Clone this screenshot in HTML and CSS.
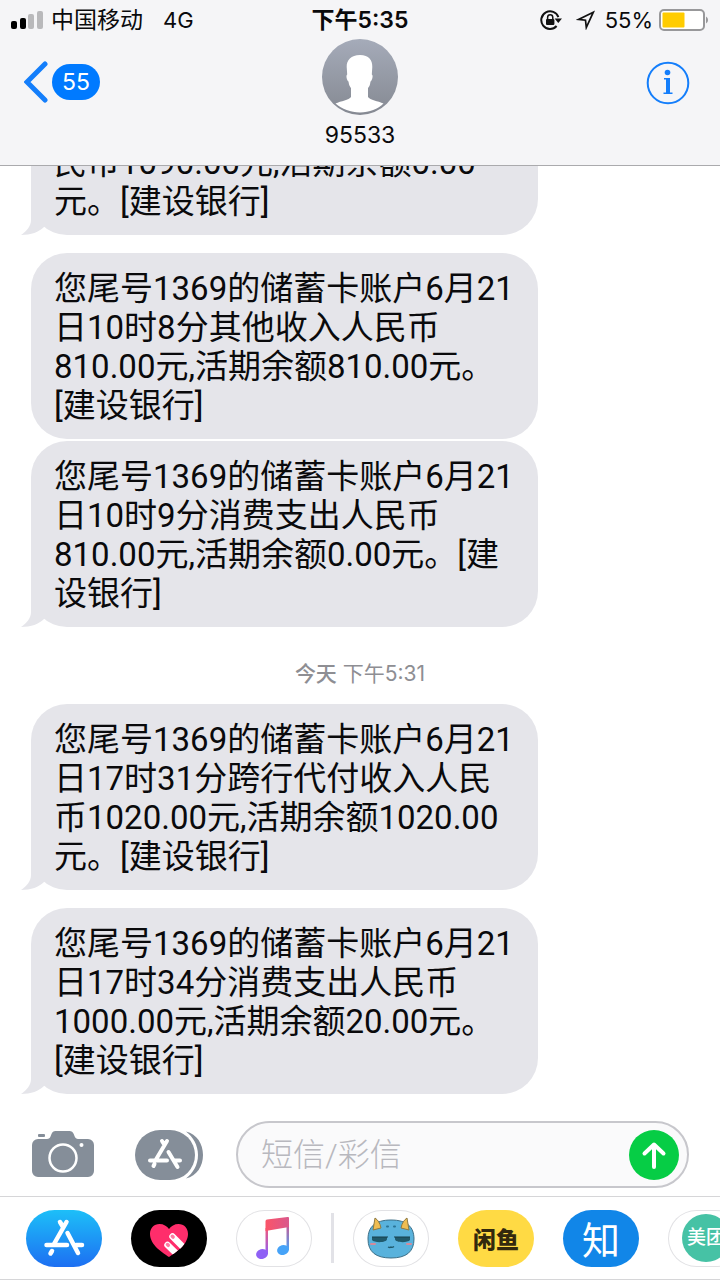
FILE: index.html
```html
<!DOCTYPE html>
<html lang="zh-CN">
<head>
  <meta charset="utf-8">
  <meta name="viewport" content="width=device-width, initial-scale=1">
  <title>95533</title>
  <link rel="stylesheet" href="styles.css">
</head>
<body>
  <header class="header">
    <div class="status-bar">
      <div class="status-left">
        <svg class="signal" width="32" height="20" viewBox="0 0 32 20">
          <rect x="0" y="11" width="6" height="8" rx="2" fill="#000"/>
          <rect x="9" y="8" width="6" height="11" rx="2" fill="#000"/>
          <rect x="17" y="4" width="6" height="15" rx="2" fill="#b9b9bb"/>
          <rect x="26" y="1" width="6" height="18" rx="2" fill="#b9b9bb"/>
        </svg>
        <span class="carrier">中国移动</span>
        <span>4G</span>
      </div>
      <div class="clock">下午5:35</div>
      <div class="status-right">
        <svg width="22" height="20" viewBox="0 0 22 20">
          <path d="M18.4 7.2A8.8 8.8 0 1 0 16.6 16" fill="none" stroke="#111" stroke-width="2"/>
          <path d="M14.6 8.5h7.4l-3.7 4.6z" fill="#111"/>
          <rect x="6" y="9" width="8.4" height="6" rx="1" fill="#111"/>
          <path d="M7.6 9.5V7.4a2.6 2.6 0 0 1 5.2 0V9.5" fill="none" stroke="#111" stroke-width="1.5"/>
        </svg>
        <svg class="location" width="20" height="20" viewBox="0 0 20 20">
          <path d="M17.3 2.2L2.5 9.4l7 .8.8 7.3z" fill="none" stroke="#111" stroke-width="1.7"/>
        </svg>
        <span>55%</span>
        <svg width="50" height="22" viewBox="0 0 50 22">
          <rect x="1" y="1" width="44" height="20" rx="4" fill="#fff" stroke="#98989a" stroke-width="2"/>
          <rect x="3.5" y="3.5" width="22" height="15" rx="1" fill="#ffcc00"/>
          <path d="M47 7.5a4 4 0 0 1 0 7z" fill="#98989a"/>
        </svg>
      </div>
    </div>

    <nav class="nav">
      <button class="back" aria-label="返回">
        <svg width="24" height="42" viewBox="0 0 24 42">
          <path d="M21 3L3 21l18 18" fill="none" stroke="#147efb" stroke-width="5" stroke-linecap="round" stroke-linejoin="miter"/>
        </svg>
        <span class="unread">55</span>
      </button>
      <div class="contact">
        <svg width="76" height="76" viewBox="0 0 76 76">
          <defs>
            <linearGradient id="avatar" x1="0" y1="0" x2="0" y2="1">
              <stop offset="0" stop-color="#a5abb9"/>
              <stop offset="1" stop-color="#858992"/>
            </linearGradient>
          </defs>
          <circle cx="38" cy="38" r="38" fill="url(#avatar)"/>
          <path d="M38 16c-9 0-13.500 5-13.300 12l.5 7.500c-1.500.5-.5 6 1.300 7 .5 4 1.500 5 2.500 6.500v9c-2 3-10 4-15.500 6.500C20 70 28.500 73.500 38 73.500S56 70 61.500 64.500C56 62 48 61 46 58v-9c1.500-1.500 2-3 2.500-6.500 1.800-1 3-6.500 1.300-7l.5-7.500C50.500 21 47 16 38 16z" fill="#fff"/>
        </svg>
        <h1 class="contact-name">95533</h1>
      </div>
      <button class="info" aria-label="详细信息">
        <svg width="44" height="44" viewBox="0 0 44 44">
          <circle cx="22" cy="22" r="20.300" fill="none" stroke="#147efb" stroke-width="2"/>
          <circle cx="21.500" cy="11.500" r="2.800" fill="#147efb"/>
          <path d="M18 17h6v14.500h2.500V33h-9v-1.500H20v-13h-2z" fill="#147efb"/>
        </svg>
      </button>
    </nav>
  </header>

  <main class="messages">
    <div class="bubble">
      民币1090.00元,活期余额0.00<br>元。[建设银行]
      <svg class="tail" width="40" height="36" viewBox="0 0 40 36"><path d="M10 0v21c0 6-4 11-10 15 10 0 18-3 23-8L40 20z"/></svg>
    </div>
    <div class="bubble spaced">
      您尾号1369的储蓄卡账户6月21<br>日10时8分其他收入人民币<br>810.00元,活期余额810.00元。<br>[建设银行]
    </div>
    <div class="bubble">
      您尾号1369的储蓄卡账户6月21<br>日10时9分消费支出人民币<br>810.00元,活期余额0.00元。[建<br>设银行]
      <svg class="tail" width="40" height="36" viewBox="0 0 40 36"><path d="M10 0v21c0 6-4 11-10 15 10 0 18-3 23-8L40 20z"/></svg>
    </div>
    <p class="time"><b>今天</b> 下午5:31</p>
    <div class="bubble">
      您尾号1369的储蓄卡账户6月21<br>日17时31分跨行代付收入人民<br>币1020.00元,活期余额1020.00<br>元。[建设银行]
      <svg class="tail" width="40" height="36" viewBox="0 0 40 36"><path d="M10 0v21c0 6-4 11-10 15 10 0 18-3 23-8L40 20z"/></svg>
    </div>
    <div class="bubble spaced">
      您尾号1369的储蓄卡账户6月21<br>日17时34分消费支出人民币<br>1000.00元,活期余额20.00元。<br>[建设银行]
      <svg class="tail" width="40" height="36" viewBox="0 0 40 36"><path d="M10 0v21c0 6-4 11-10 15 10 0 18-3 23-8L40 20z"/></svg>
    </div>
  </main>

  <form class="compose">
    <button type="button" class="tool" aria-label="相机">
      <svg width="62" height="48" viewBox="0 0 62 48">
        <rect x="6" y="3" width="7" height="3" rx="1" fill="#858e99"/>
        <path d="M6 8h9c2 0 3-1 3.500-2.500l1-2.500C20.200 1 21.500 0 23.500 0h14c2 0 3.500 1 4.200 3l1 2.500C43.300 7 44.500 8 46 8h10a6 6 0 0 1 6 6v26a6 6 0 0 1-6 6H6a6 6 0 0 1-6-6V14a6 6 0 0 1 6-6z" fill="#858e99"/>
        <circle cx="31" cy="27" r="13.500" fill="none" stroke="#fff" stroke-width="2.500"/>
        <circle cx="49.500" cy="14" r="2" fill="#fff"/>
      </svg>
    </button>
    <button type="button" class="tool" aria-label="应用">
      <svg width="68" height="50" viewBox="0 0 68 50">
        <path d="M51 1.500C62 4 68 14 68 25s-6 21-17 23.500C58 43 63 35 63 25S58 7 51 1.500z" fill="#858e99"/>
        <rect width="60" height="50" rx="25" fill="#858e99"/>
        <g fill="none" stroke="#fff" stroke-width="4" stroke-linecap="round">
          <path d="M27 11l2.500 4M32 11L21 29.500M19.500 34l-1 2M15 30.500h17M40 30.500h5M33.500 22l9 15"/>
        </g>
      </svg>
    </button>
    <div class="field">
      <input type="text" class="text" aria-label="短信/彩信" placeholder="短信/彩信">
      <button type="submit" class="send" aria-label="发送">
        <svg width="50" height="50" viewBox="0 0 50 50">
          <circle cx="25" cy="25" r="25" fill="#06cd45"/>
          <path d="M25 37V15M15.500 23.500l9.500-9 9.500 9" fill="none" stroke="#fff" stroke-width="4" stroke-linecap="round" stroke-linejoin="round"/>
        </svg>
      </button>
    </div>
  </form>

  <footer class="dock">
    <button class="app store" aria-label="App Store">
      <svg width="76" height="57" viewBox="0 0 76 57">
        <g fill="none" stroke="#fff" stroke-width="4.500" stroke-linecap="round">
          <path d="M34 12l3 5M40.500 12L28 34M26 41l-1.500 2.500M20.500 35H41M50 35h6M41.500 23L52 43"/>
        </g>
      </svg>
    </button>
    <button class="app touch" aria-label="Digital Touch">
      <svg width="76" height="57" viewBox="0 0 76 57">
        <defs>
          <clipPath id="heart"><path d="M38 47C32 43 19 35 19 24c0-6 4-10 9.500-10 4 0 7.500 2 9.500 5 2-3 5.500-5 9.500-5C53 14 57 18 57 24c0 11-13 19-19 23z"/></clipPath>
        </defs>
        <g clip-path="url(#heart)">
          <rect width="76" height="57" fill="#ff2d6b"/>
          <path d="M41.500 26.500L56 41M36.500 35L51 49" stroke="#fff" stroke-width="6.500" stroke-linecap="round"/>
          <path d="M41.300 26.300l.8.8M36.500 34.500l.8.8" stroke="#ff7ba2" stroke-width="3.500" stroke-linecap="round"/>
        </g>
      </svg>
    </button>
    <button class="app" aria-label="音乐">
      <svg width="76" height="57" viewBox="0 0 76 57">
        <defs>
          <linearGradient id="beam" x1="0" y1="0" x2="1" y2="0"><stop offset="0" stop-color="#fb5468"/><stop offset="1" stop-color="#d9588c"/></linearGradient>
          <linearGradient id="stem1" x1="0" y1="0" x2="0" y2="1"><stop offset="0" stop-color="#f3587a"/><stop offset="1" stop-color="#8f61f5"/></linearGradient>
          <linearGradient id="stem2" x1="0" y1="0" x2="0" y2="1"><stop offset="0" stop-color="#d0588f"/><stop offset="1" stop-color="#46a3f8"/></linearGradient>
        </defs>
        <path d="M29.500 18h2.500v26h-2.500z" fill="url(#stem1)"/>
        <path d="M50.500 14h2.500v26h-2.500z" fill="url(#stem2)"/>
        <path d="M29.500 11.500c0-1 .5-1.800 1.500-2L51.500 7c1-.2 1.500.3 1.500 1.200V17l-23.500 4z" fill="url(#beam)"/>
        <ellipse cx="26" cy="44" rx="6" ry="5" transform="rotate(-15 26 44)" fill="#8f61f5"/>
        <ellipse cx="47" cy="40" rx="6" ry="5" transform="rotate(-15 47 40)" fill="#46a3f8"/>
      </svg>
    </button>
    <span class="divider"></span>
    <button class="app" aria-label="表情">
      <svg width="76" height="57" viewBox="0 0 76 57">
        <path d="M38 10c16 0 23 7 23 19 0 13-8 19-23 19s-23-6-23-19c0-12 7-19 23-19z" fill="#59b2dc" stroke="#3d6f87" stroke-width="1"/>
        <path d="M20 20l2-12c3 2 5 5 6 10-3 1-5 1-8 2zM56 20L54 8c-3 2-5 5-6 10 3 1 5 1 8 2z" fill="#efbd52" stroke="#8e7a43" stroke-width="1"/>
        <path d="M34 16.500h1M41 16.500h1" stroke="#2b7395" stroke-width="2" stroke-linecap="round"/>
        <path d="M19 27h15v2c0 4-13 4-15 1zM42 27h15v3c-2 3-15 3-15-1z" fill="#205a6c"/>
        <path d="M19 27h16M41 27h16" stroke="#173e4b" stroke-width="1"/>
        <path d="M18 34h4M54 34h4" stroke="#d58a9a" stroke-width="2" stroke-linecap="round"/>
        <path d="M35 37q2 1 3 0 1 1 3-.5" fill="none" stroke="#205a6c" stroke-width="1.300"/>
      </svg>
    </button>
    <button class="app xianyu">闲鱼</button>
    <button class="app zhihu">知</button>
    <button class="app"><span class="meituan">美团</span></button>
  </footer>
</body>
</html>
```

FILE: styles.css
```css
* {
  box-sizing: border-box;
}
body {
  display: flex;
  flex-direction: column;
  height: 100vh;
  margin: 0;
  overflow: hidden;
  background-color: #fff;
  color: #0a0a0c;
  font-family: Inter, "Noto Sans CJK SC", sans-serif;
}
button {
  padding: 0;
  border: none;
  background: none;
  font-family: inherit;
  cursor: pointer;
}
svg {
  display: block;
}

/* Header */
.header {
  flex: none;
  background-color: #f5f5f7;
  border-bottom: 1px solid #aaaaad;
}
.status-bar {
  display: grid;
  grid-template-columns: 1fr auto 1fr;
  align-items: center;
  height: 39px;
  padding: 0 11px;
  font-size: 22px;
  line-height: 38px;
}
.status-left, .status-right {
  display: flex;
  align-items: center;
}
.status-left {
  gap: 8px;
}
.carrier {
  margin-right: 12px;
  font-size: 23px;
}
.status-right {
  justify-content: flex-end;
  gap: 6px;
}
.location {
  margin: 0 3px 0 8px;
}
.clock {
  font-size: 23px;
  font-weight: 600;
}
.nav {
  display: grid;
  grid-template-columns: 1fr auto 1fr;
  align-items: start;
  height: 126px;
  padding: 0 24px;
}
.back {
  display: flex;
  align-items: center;
  justify-self: start;
  gap: 4px;
  margin-top: 22px;
}
.unread {
  width: 48px;
  border-radius: 18px;
  background-color: #007aff;
  color: #fff;
  font-size: 23px;
  line-height: 36px;
}
.contact {
  display: flex;
  flex-direction: column;
  align-items: center;
}
.contact-name {
  margin: 4px 0 0;
  font-size: 23px;
  font-weight: 400;
  line-height: 32px;
}
.info {
  justify-self: end;
  margin: 22px 6px 0 0;
}

/* Conversation */
.messages {
  display: flex;
  flex: 1;
  flex-direction: column;
  justify-content: flex-end;
  align-items: flex-start;
  gap: 2px;
  min-height: 0;
  padding: 0 31px 9px;
  overflow: hidden;
}
.bubble {
  position: relative;
  flex: none;
  width: 77%;
  padding: 16px 23px 14px;
  border-radius: 36px;
  background-color: #e5e5ea;
  font-family: Roboto, "Noto Sans CJK SC", sans-serif;
  font-size: 33px;
  line-height: 39px;
  white-space: nowrap;
}
.bubble.spaced {
  margin-top: 16px;
}
.tail {
  position: absolute;
  bottom: 0;
  left: -10px;
  fill: #e5e5ea;
}
.time {
  align-self: center;
  margin: 28px 0 12px;
  color: #8e8e93;
  font-size: 21px;
  line-height: 33px;
}
.time b {
  font-weight: 500;
}

/* Compose bar */
.compose {
  display: flex;
  flex: none;
  align-items: center;
  gap: 41px;
  margin: 0;
  padding: 18px 31px 8px 32px;
}
.tool {
  flex: none;
}
.field {
  display: flex;
  flex: 1;
  align-items: center;
  min-width: 0;
  height: 67px;
  margin-left: -8px;
  padding: 0 8px 0 23px;
  border: 2px solid #c7c7cc;
  border-radius: 34px;
  background-color: #fafafb;
}
.text {
  flex: 1;
  min-width: 0;
  padding: 0;
  border: none;
  outline: none;
  background: none;
  font-family: Roboto, "Noto Sans CJK SC", sans-serif;
  font-size: 32px;
  font-weight: 300;
}
.text::placeholder {
  color: #b8b8be;
  opacity: 1;
}

/* App dock */
.dock {
  display: flex;
  flex: none;
  align-items: center;
  gap: 29px;
  height: 84px;
  padding: 0 26px;
  border-top: 1px solid #d6d6d8;
  border-bottom: 1px solid #d6d6d8;
  overflow: hidden;
}
.app {
  display: flex;
  flex: none;
  align-items: center;
  justify-content: center;
  width: 76px;
  height: 57px;
  border-radius: 29px;
  box-shadow: inset 0 0 0 1px #e2e2e5;
}
.store {
  background: linear-gradient(#1dbff8, #1d6ff2);
  box-shadow: none;
}
.touch {
  background-color: #000;
  box-shadow: none;
}
.divider {
  flex: none;
  width: 3px;
  height: 50px;
  margin: 0 -10px;
  background-color: #e2e2e7;
}
.xianyu {
  background-color: #ffda44;
  box-shadow: none;
  color: #33290d;
  font-size: 23px;
  font-weight: 900;
}
.zhihu {
  background-color: #1186e8;
  box-shadow: none;
  color: #fff;
  font-family: "Noto Sans CJK SC", sans-serif;
  font-size: 38px;
  line-height: 48px;
}
.meituan {
  flex: none;
  width: 48px;
  border-radius: 24px;
  background-color: #46c2a5;
  color: #fff;
  font-size: 19px;
  font-weight: 500;
  line-height: 48px;
  white-space: nowrap;
}
```
